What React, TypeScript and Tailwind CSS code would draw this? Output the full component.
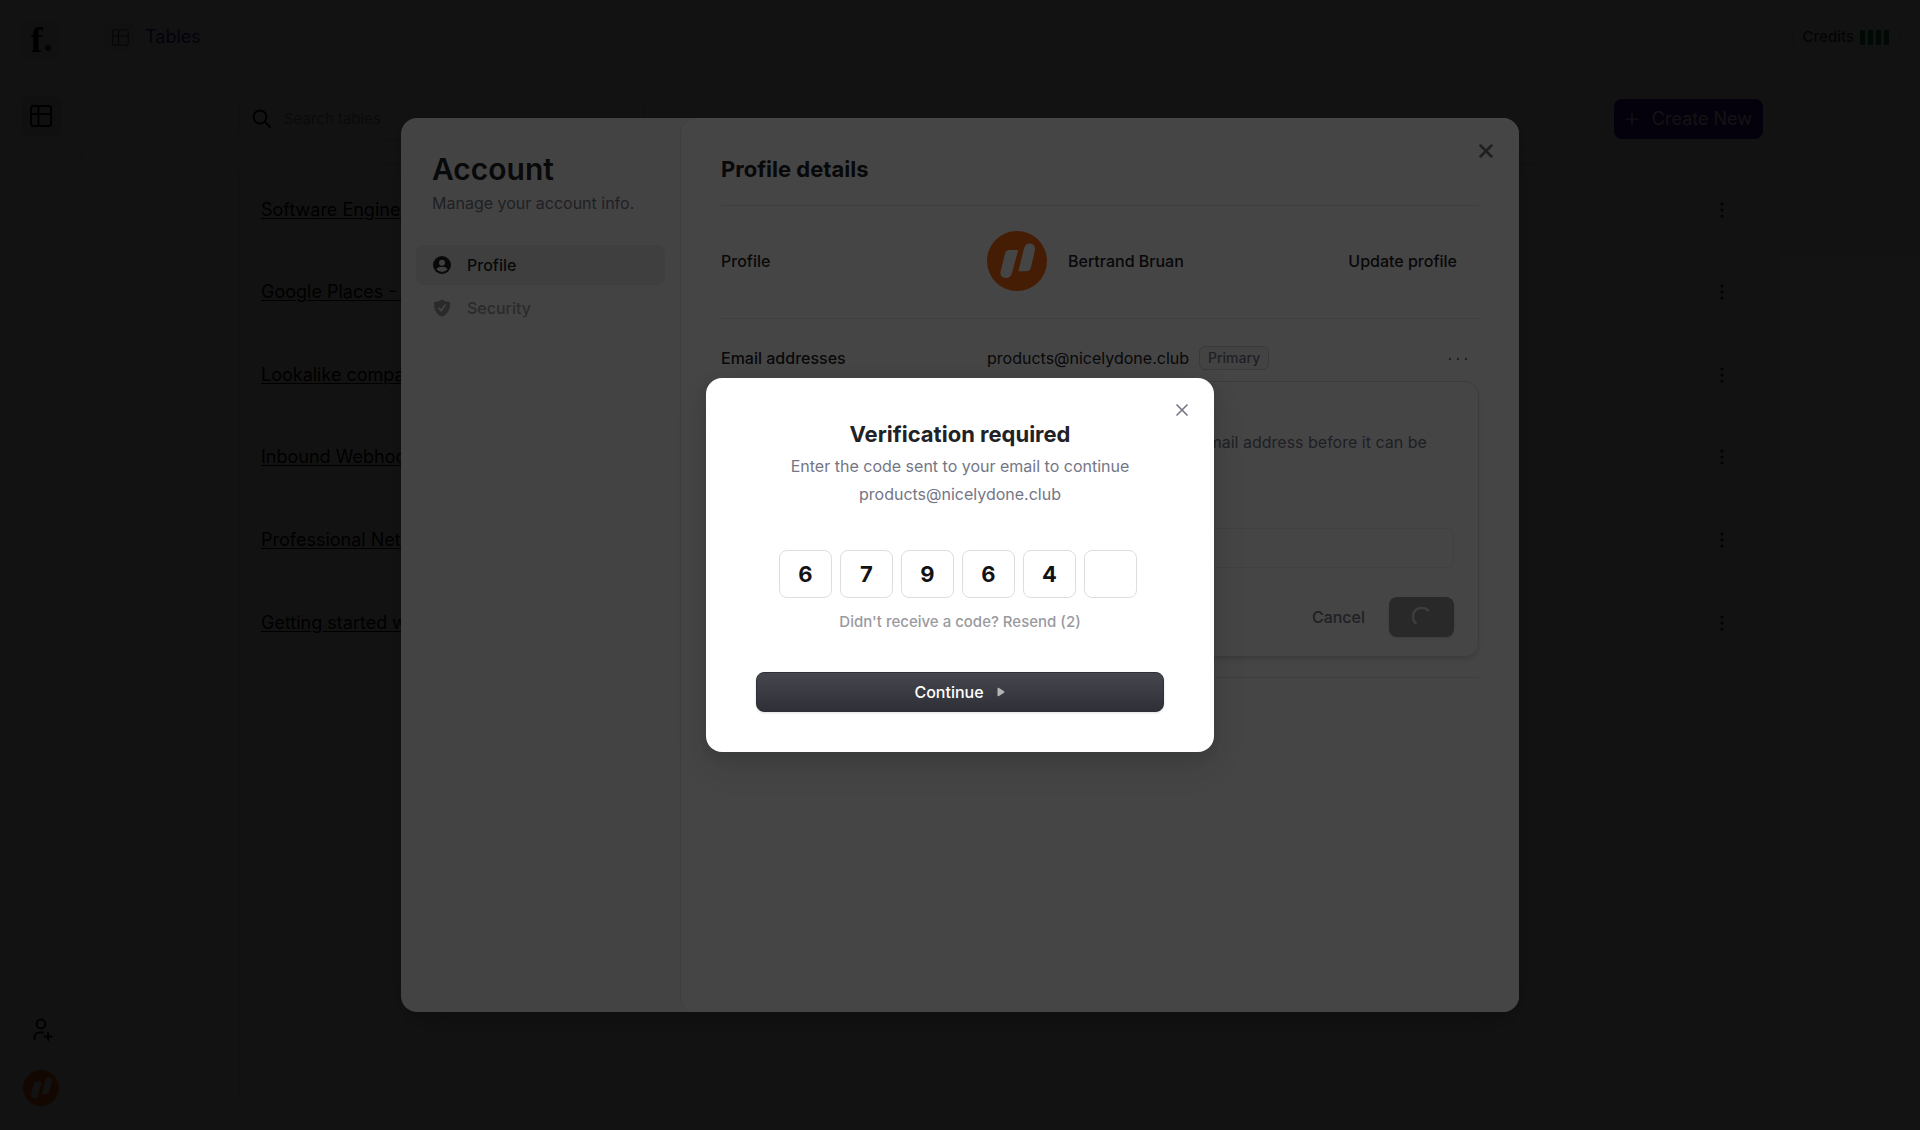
import { Plus, X } from "lucide-react";

const TABLES = [
  "Software Engineers",
  "Google Places - Coffee",
  "Lookalike companies",
  "Inbound Webhook",
  "Professional Network",
  "Getting started with",
];

const CODE = ["6", "7", "9", "6", "4", ""];

function BrandMark({ className }: { className: string }) {
  return (
    <svg viewBox="0 0 60 60" className={className} role="img" aria-label="Bertrand Bruan">
      <circle cx="30" cy="30" r="30" fill="#ff6812" />
      <path
        fill="#fff"
        d="M22.5 19H31.2L25 42C24 45.5 22 47 19 47C15 47 12.7 44.2 13.6 40.6L17.8 23.2C18.5 20.4 20 19 22.5 19ZM31.4 40.2L37 17.5C38 14 39.7 12.5 42.4 12.5C46.4 12.5 48.8 15.5 47.9 19.5L44 36C43.3 38.9 41.8 40.2 39.2 40.2Z"
      />
    </svg>
  );
}

function LayoutIcon({ className, strokeWidth }: { className: string; strokeWidth: number }) {
  return (
    <svg viewBox="0 0 22 22" className={className} fill="none" stroke="currentColor" strokeWidth={strokeWidth}>
      <rect x="1" y="1" width="20" height="20" rx="2.5" />
      <path d="M1 9H21M8.5 1V21" />
    </svg>
  );
}

function DotsVertical() {
  return (
    <svg viewBox="0 0 20 20" className="size-5" fill="currentColor">
      <circle cx="10" cy="4" r="1.6" />
      <circle cx="10" cy="10" r="1.6" />
      <circle cx="10" cy="16" r="1.6" />
    </svg>
  );
}

function Sidebar() {
  return (
    <aside className="flex w-[82px] shrink-0 flex-col items-center border-r border-[#dfdfe2]">
      <div className="flex h-[76px] w-full justify-center border-b border-[#dfdfe2] pt-5">
        <a
          href="#home"
          className="flex size-10 items-center justify-center gap-0.5 rounded-lg bg-[#eeeef0] font-['Liberation_Serif',serif] text-4xl font-bold text-black"
        >
          f
          <span className="mt-4 size-1.5 rounded-full bg-[#3b1fa0]" />
        </a>
      </div>
      <div className="flex h-[83px] w-full justify-center border-b border-[#dfdfe2] pt-5">
        <button
          aria-label="Tables"
          className="flex size-10 items-center justify-center rounded-lg bg-[#e6e6e9] text-black"
        >
          <LayoutIcon className="size-[22px]" strokeWidth={2} />
        </button>
      </div>
      <div className="mt-auto flex flex-col items-center gap-7 pb-6">
        <button aria-label="Invite member" className="text-black">
          <svg
            viewBox="0 0 24 24"
            className="size-6"
            fill="none"
            stroke="currentColor"
            strokeWidth="2"
            strokeLinecap="round"
          >
            <circle cx="12" cy="6" r="4.4" />
            <path d="M5.5 21V19.5C5.5 16.5 7.5 14.4 10.5 14.4H14" />
            <path d="M19.2 15V22M15.7 18.5H22.7" />
          </svg>
        </button>
        <button aria-label="Open user menu">
          <BrandMark className="size-9" />
        </button>
      </div>
    </aside>
  );
}

function Header() {
  return (
    <header className="flex h-[76px] items-start justify-between border-b border-[#dfdfe2] pt-[22px] pr-5 pl-[23px]">
      <div className="flex items-center gap-2.5">
        <span className="flex size-[30px] items-center justify-center rounded-md bg-[#edf1ef] text-[#33443d]">
          <LayoutIcon className="size-[17px]" strokeWidth={1.5} />
        </span>
        <a href="#tables" className="text-lg text-[#3b1fb0]">
          Tables
        </a>
      </div>
      <div className="flex h-[30px] items-center gap-1.5 rounded-lg border border-[#dfdfe2] px-2.5 text-[15px] font-medium text-[#374151]">
        Credits
        <span className="flex gap-[3px]">
          {[0, 1, 2, 3].map((i) => (
            <span key={i} className="h-[15px] w-[5px] rounded-[1px] bg-[#15803d]" />
          ))}
        </span>
      </div>
    </header>
  );
}

function TablesPage() {
  return (
    <div className="flex h-screen bg-white">
      <Sidebar />
      <div className="flex min-w-0 flex-1 flex-col">
        <Header />
        <main className="mx-auto flex w-full max-w-[1524px] flex-1 flex-col pt-[21px] pb-[22px]">
          <div className="flex items-center justify-between">
            <label className="flex h-11 w-[405px] items-center gap-3 rounded-lg border border-[#dfdfe2] px-3">
              <svg
                viewBox="0 0 20 20"
                className="size-5"
                fill="none"
                stroke="#000"
                strokeWidth="2"
                strokeLinecap="round"
              >
                <circle cx="8" cy="8" r="6.5" />
                <path d="M13 13L18 18" />
              </svg>
              <input
                aria-label="Search tables"
                placeholder="Search tables"
                className="min-w-0 flex-1 text-[15px] placeholder:text-[#8f8f98]"
              />
            </label>
            <button className="flex h-10 items-center gap-2.5 rounded-lg bg-[#3f10b4] pr-[11px] pl-2 text-lg text-white">
              <Plus className="size-5" strokeWidth={1.5} />
              Create New
            </button>
          </div>
          <div className="mt-[22px] flex-1 rounded-lg border border-[#dfdfe2] pt-[5px] pr-5 pl-[21px]">
            <ul className="grid h-[495px] grid-rows-6">
              {TABLES.map((name) => (
                <li
                  key={name}
                  className="flex items-center justify-between border-b border-[#e6e6e9] pr-2.5 last:border-b-0"
                >
                  <a href="#table" className="text-lg text-black underline underline-offset-2">
                    {name}
                  </a>
                  <button aria-label={`${name} options`} className="text-[#2e1a8a]">
                    <DotsVertical />
                  </button>
                </li>
              ))}
            </ul>
          </div>
        </main>
      </div>
    </div>
  );
}

function AddEmailCard() {
  return (
    <div className="mt-2.5 ml-auto w-[492px] rounded-[14px] border border-[#dcdce0] px-6 pt-[17px] pb-[19px] shadow-md">
      <h4 className="font-semibold">Add email address</h4>
      <p className="mt-[7px] leading-6 text-[#747686]">
        You'll need to verify this email address before it can be added to your account.
      </p>
      <label htmlFor="new-email" className="mt-[18px] block font-medium">
        Email address
      </label>
      <input
        id="new-email"
        type="email"
        className="mt-2 h-10 w-full rounded-lg border border-[#ebebee] px-3"
      />
      <div className="mt-[29px] flex justify-end gap-1">
        <button className="h-10 px-5 font-medium text-[#747686]">Cancel</button>
        <button
          aria-label="Adding"
          className="flex h-10 w-[65px] items-center justify-center rounded-lg bg-[#97979c] shadow-sm"
        >
          <svg
            viewBox="0 0 20 20"
            className="size-5"
            fill="none"
            stroke="#e0e0e2"
            strokeWidth="2.5"
            strokeLinecap="round"
          >
            <path d="M3.5 16A8.5 8.5 0 0 1 16 3.4" />
          </svg>
        </button>
      </div>
    </div>
  );
}

function AccountDialog() {
  return (
    <div
      role="dialog"
      aria-label="Account"
      className="relative flex h-[894px] w-[1118px] overflow-hidden rounded-2xl bg-[#f8f8f8] text-base text-[#212126] shadow-[0_5px_15px_rgba(0,0,0,0.08),0_15px_35px_-5px_rgba(25,28,33,0.2)]"
    >
      <nav className="w-[279px] shrink-0 px-[15px] pt-[33px]">
        <h1 className="px-4 text-3xl leading-9 font-semibold">Account</h1>
        <p className="mt-1 px-4 leading-6 text-[#747686]">Manage your account info.</p>
        <div className="mt-[30px] flex flex-col gap-[3px]">
          <button className="flex h-10 items-center gap-4 rounded-lg bg-[#e9e9ea] px-[17px] font-medium">
            <svg viewBox="0 0 18 18" className="size-[18px]">
              <circle cx="9" cy="9" r="9" fill="#212126" />
              <circle cx="9" cy="6.8" r="3" fill="#e9e9ea" />
              <path d="M3.4 13.3C4.6 11.5 6.6 10.8 9 10.8S13.4 11.5 14.6 13.3A7.2 7.2 0 0 1 3.4 13.3Z" fill="#e9e9ea" />
            </svg>
            Profile
          </button>
          <button className="flex h-10 items-center gap-4 rounded-lg px-[17px] font-medium text-[#9a9aa0]">
            <svg viewBox="0 0 18 18" className="size-[18px]">
              <path
                d="M9 .3C11.2 2 14 2.9 17 2.9C17.6 9.5 15 15.4 9 17.7C3 15.4 .4 9.5 1 2.9C4 2.9 6.8 2 9 .3Z"
                fill="currentColor"
              />
              <path
                d="M6 9.4L8.2 11.7L12 6.2"
                fill="none"
                stroke="#f8f8f8"
                strokeWidth="1.8"
                strokeLinecap="round"
                strokeLinejoin="round"
              />
            </svg>
            Security
          </button>
        </div>
      </nav>

      <div className="min-w-0 flex-1 rounded-l-2xl border-l border-[#e2e2e5] bg-white px-10 pt-9">
        <h2 className="pb-5 text-[22px] leading-[31px] font-bold">Profile details</h2>

        <div className="flex items-center border-t border-[#e6e6e9] pt-[25px] pb-[27px] font-medium">
          <h3 className="w-[266px] shrink-0">Profile</h3>
          <BrandMark className="size-[60px]" />
          <span className="ml-[21px]">Bertrand Bruan</span>
          <button className="mr-[22px] ml-auto">Update profile</button>
        </div>

        <div className="border-y border-[#e6e6e9] pt-[26px] pb-5">
          <div className="flex h-[26px] items-center">
            <h3 className="w-[266px] shrink-0 font-medium">Email addresses</h3>
            <span>products@nicelydone.club</span>
            <span className="ml-2.5 rounded-md border border-[#d3d3d8] bg-[#f7f7f8] px-2 text-sm leading-[22px] font-medium text-[#747686]">
              Primary
            </span>
            <button aria-label="Email options" className="mr-[11px] ml-auto text-[#747686]">
              <svg viewBox="0 0 20 20" className="size-5" fill="currentColor">
                <circle cx="2" cy="11" r="1.2" />
                <circle cx="10" cy="11" r="1.2" />
                <circle cx="18" cy="11" r="1.2" />
              </svg>
            </button>
          </div>
          <AddEmailCard />
        </div>
      </div>
      <button aria-label="Close account" className="absolute top-[22px] right-[22px] text-[#747686]">
        <X className="size-[22px]" strokeWidth={2.8} />
      </button>
    </div>
  );
}

function VerificationDialog() {
  return (
    <div
      role="dialog"
      aria-label="Verification required"
      className="relative flex w-[508px] flex-col items-center rounded-2xl bg-white px-[50px] pt-[41px] pb-10 shadow-[0_5px_15px_rgba(0,0,0,0.08),0_15px_35px_-5px_rgba(25,28,33,0.2)]"
    >
      <button aria-label="Close verification" className="absolute top-[22px] right-[22px] text-[#747686]">
        <X className="size-5" strokeWidth={2} />
      </button>
      <h2 className="text-[22px] leading-[30px] font-bold text-[#212126]">Verification required</h2>
      <p className="mt-[3px] text-center text-base leading-7 text-[#747686]">
        Enter the code sent to your email to continue
        <br />
        products@nicelydone.club
      </p>
      <div className="mt-[42px] flex gap-2 pr-1">
        {CODE.map((digit, i) => (
          <input
            key={i}
            aria-label={`Digit ${i + 1}`}
            defaultValue={digit}
            maxLength={1}
            className="h-12 w-[53px] rounded-lg border border-[#dedee0] text-center text-[22px] font-bold text-[#131316]"
          />
        ))}
      </div>
      <button className="mt-3 text-[15px] leading-6 font-medium text-[#9a9aa0]">
        Didn't receive a code? Resend (2)
      </button>
      <button className="mt-[38px] flex h-10 w-full items-center justify-center gap-3 rounded-lg border border-[#2f3037] bg-linear-to-b from-[#46474e] to-[#2f3037] text-base font-medium text-white shadow-sm">
        Continue
        <svg viewBox="0 0 10 10" className="size-2.5" fill="#b5b5b8">
          <path d="M1.5 1.8C1.5 1 2.3 .6 3 1L8 4.2C8.6 4.6 8.6 5.4 8 5.8L3 9C2.3 9.4 1.5 9 1.5 8.2Z" />
        </svg>
      </button>
    </div>
  );
}

export default function App() {
  return (
    <div className="relative h-screen overflow-hidden font-['Inter',sans-serif]">
      <TablesPage />
      <div className="absolute inset-0 flex items-center justify-center bg-black/73">
        <AccountDialog />
      </div>
      {/* Stacks a second scrim over the account dialog */}
      <div className="absolute inset-0 flex items-center justify-center bg-black/73">
        <VerificationDialog />
      </div>
    </div>
  );
}
